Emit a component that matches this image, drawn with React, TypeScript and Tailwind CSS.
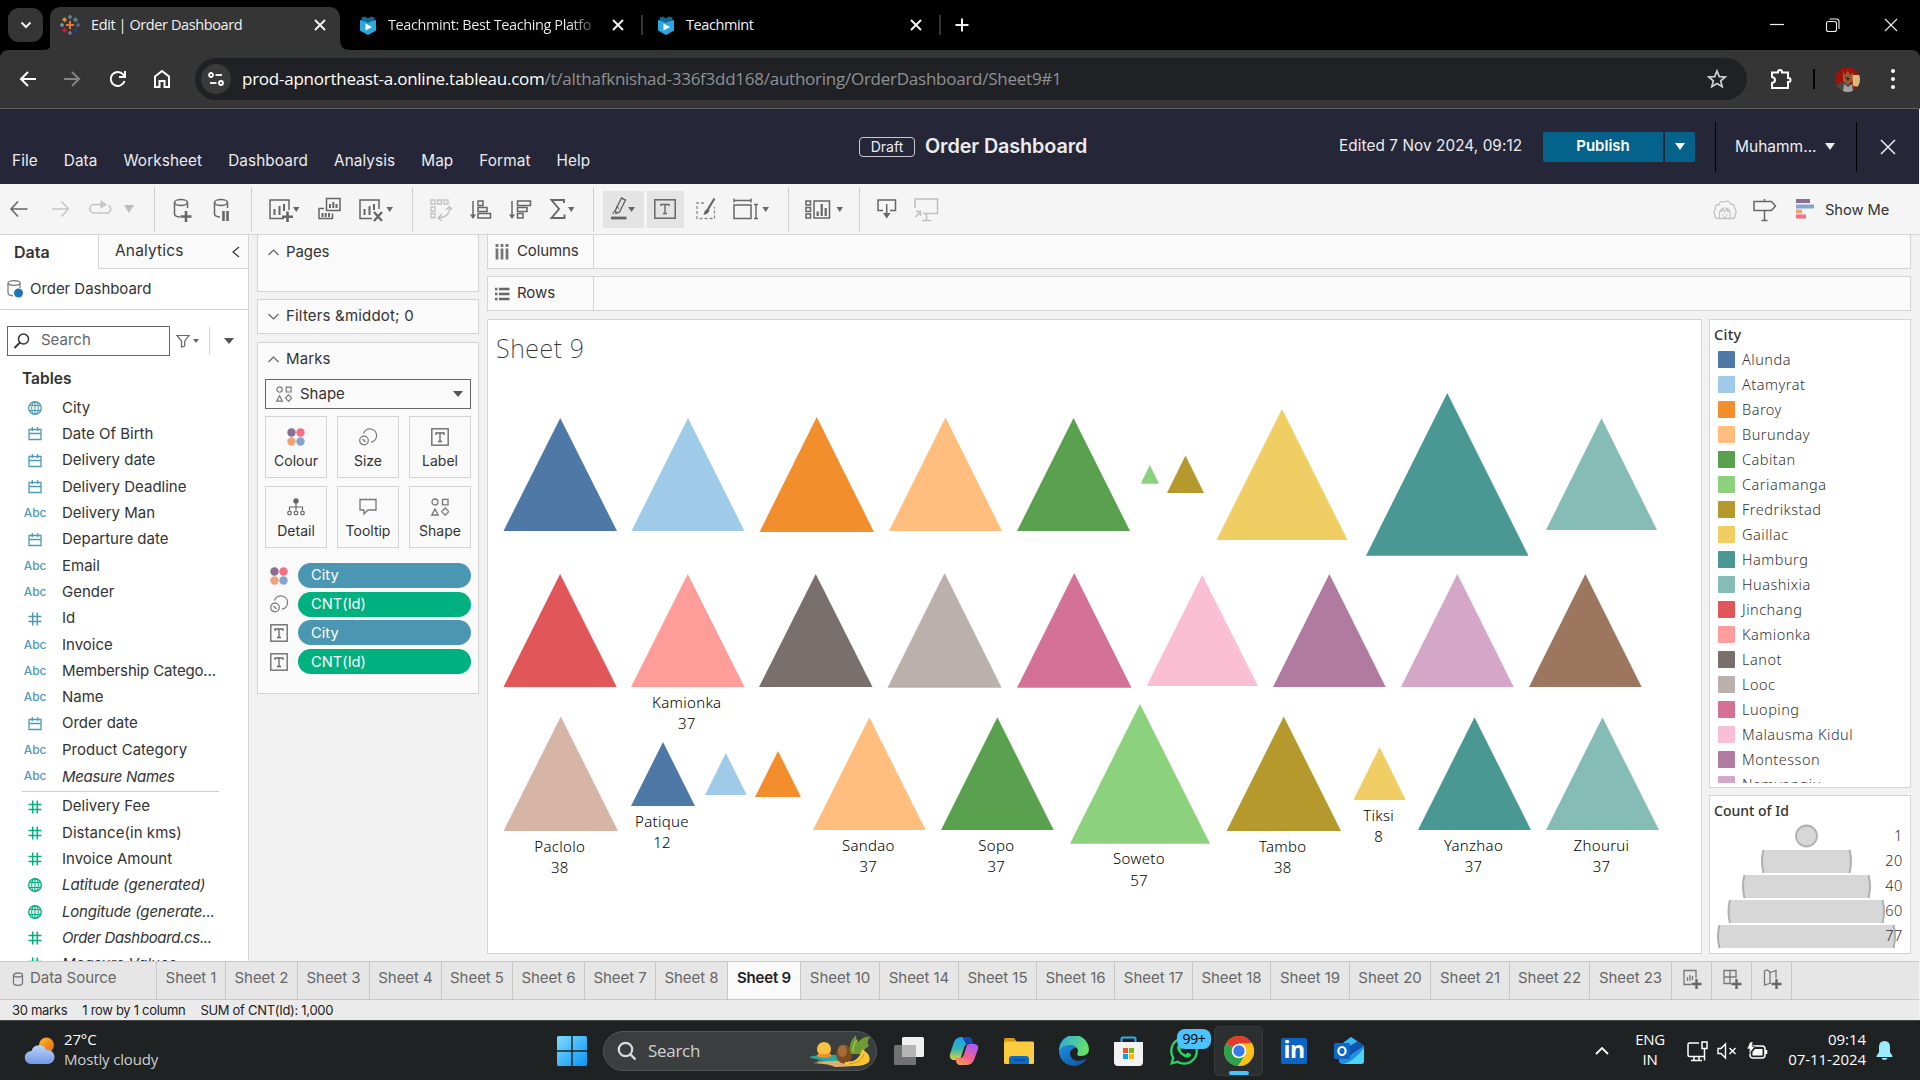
import React from "react";
import { FaWhatsapp } from "react-icons/fa";

type IconProps = { w: number; h?: number; className?: string; children: React.ReactNode };

function Icon({ w, h = 24, className = "", children }: IconProps) {
  return (
    <svg
      width={w}
      height={h}
      viewBox={`0 0 ${w} ${h}`}
      fill="none"
      stroke="currentColor"
      strokeWidth={1.5}
      className={`shrink-0 overflow-visible ${className}`}
    >
      {children}
    </svg>
  );
}

function Caret({ className = "", w = 10, h = 6 }: { className?: string; w?: number; h?: number }) {
  return (
    <svg width={w} height={h} viewBox="0 0 10 6" preserveAspectRatio="none" className={`shrink-0 ${className}`}>
      <path d="M0 0H10L5 6Z" fill="currentColor" />
    </svg>
  );
}

function Close({ s, sw, className = "" }: { s: number; sw: number; className?: string }) {
  return (
    <svg width={s} height={s} viewBox={`0 0 ${s} ${s}`} stroke="currentColor" strokeWidth={sw} className={`shrink-0 ${className}`}>
      <path d={`M1 1L${s - 1} ${s - 1}M${s - 1} 1L1 ${s - 1}`} />
    </svg>
  );
}

function TeachmintIcon({ className = "" }: { className?: string }) {
  return (
    <svg width="16" height="19" viewBox="0 0 16 19" className={`shrink-0 ${className}`}>
      <path d="M1.500 1.500L5 0.500L8 2.500L11 0.500L14.500 1.500V6H1.500Z" fill="#15678f" />
      <path d="M0 4L8 6.500L16 4V14.500L8 19L0 14.500Z" fill="#29a9e1" />
      <path d="M5.500 7.500L12 11L5.500 14.500Z" fill="#fff" />
    </svg>
  );
}

function TabStrip() {
  return (
    <div className="flex h-[50px] items-end bg-black text-[#f1f1f1]">
      <div className="mb-[8px] ml-[8px] flex h-[34px] w-[35px] items-center justify-center rounded-[11px] bg-[#353535]">
        <Icon w={12} h={8}>
          <path d="M1.500 1.500L6 6L10.500 1.500" strokeWidth={2} />
        </Icon>
      </div>
      <svg width="9" height="10" className="shrink-0">
        <path d="M9 0V10H0Q9 10 9 0Z" fill="#353535" />
      </svg>
      <div className="-ml-[2px] flex h-[43px] w-[290px] items-center rounded-t-[10px] bg-[#353535] pb-[7px]">
        <svg width="20" height="20" viewBox="0 0 20 20" className="ml-[10px] shrink-0" strokeWidth="1.700">
          <path d="M10 6V14M6 10H14" stroke="#e8762c" strokeWidth="2" />
          <path d="M10 0V4M8 2H12" stroke="#5b879b" />
          <path d="M10 16V20M8 18H12" stroke="#7b6f9e" />
          <path d="M2 8V12M0 10H4" stroke="#7199a6" />
          <path d="M18 8V12M16 10H20" stroke="#5c6692" />
          <path d="M4.500 2.500V7M2.300 4.700H6.700" stroke="#eb912c" />
          <path d="M15.500 2.500V7M13.300 4.700H17.700" stroke="#59879b" />
          <path d="M4.500 13V17.500M2.300 15.300H6.700" stroke="#c72037" />
          <path d="M15.500 13V17.500M13.300 15.300H17.700" stroke="#1f457e" />
        </svg>
        <span className="ml-[11px] w-[223px] text-[14.500px] tracking-[-0.4px]">Edit | Order Dashboard</span>
        <Close s={12} sw={2} />
      </div>
      <svg width="10" height="10" className="shrink-0">
        <path d="M0 0V10H10Q0 10 0 0Z" fill="#353535" />
      </svg>
      <div className="mb-[7px] flex h-[36px] items-center">
        <TeachmintIcon className="ml-[10px]" />
        <span className="ml-[12px] w-[211px] whitespace-nowrap bg-linear-to-r from-[#f1f1f1] from-86% to-[#222] bg-clip-text text-[14.500px] tracking-[-0.4px] text-transparent">
          Teachmint: Best Teaching Platfo
        </span>
        <Close s={12} sw={2} className="ml-[13px]" />
        <div className="ml-[17px] h-[20px] w-[2px] bg-[#353535]" />
        <TeachmintIcon className="ml-[15px]" />
        <span className="ml-[12px] w-[224px] text-[14.500px] tracking-[-0.4px]">Teachmint</span>
        <Close s={12} sw={2} />
        <div className="ml-[17px] h-[20px] w-[2px] bg-[#353535]" />
        <Icon w={14} h={14} className="ml-[14px]">
          <path d="M7 0.500V13.500M0.500 7H13.500" strokeWidth={2} />
        </Icon>
      </div>
      <div className="mb-[7px] ml-auto flex h-[36px] items-center pr-[22px]">
        <Icon w={14} h={14}>
          <path d="M0 6.500H14" strokeWidth={1.200} />
        </Icon>
        <Icon w={14} h={14} className="ml-[42px]">
          <rect x="0.500" y="3.500" width="10" height="10" rx="2" strokeWidth={1.100} />
          <path d="M3.500 1H10.500Q13 1 13 3.500V11" strokeWidth={1.100} />
        </Icon>
        <Close s={14} sw={1.1} className="ml-[44px]" />
      </div>
    </div>
  );
}

function AddressBar() {
  return (
    <div className="bg-black">
      <div className="flex h-[59px] items-center rounded-t-[8px] border-b border-[#5f5f5f] bg-[#353535] text-white">
        <Icon w={16} h={16} className="ml-[20px]">
          <path d="M8 1L1 8L8 15M1 8H16" strokeWidth={2} />
        </Icon>
        <Icon w={16} h={16} className="ml-[28px] text-[#848484]">
          <path d="M8 1L15 8L8 15M15 8H0" strokeWidth={2} />
        </Icon>
        <Icon w={16} h={16} className="ml-[30px]">
          <path d="M14.500 10A7 7 0 1 1 13 3.300L15 5.500" strokeWidth={2} />
          <path d="M15 0V6H9" strokeWidth={2} />
        </Icon>
        <Icon w={16} h={18} className="ml-[28px]">
          <path d="M1 6.500L8 1L15 6.500V17H10.500V11H5.500V17H1Z" strokeWidth={2} />
        </Icon>
        <div className="ml-[25px] flex h-[42px] w-[1552px] items-center rounded-full bg-[#202124]">
          <div className="ml-[6px] flex h-[30px] w-[30px] items-center justify-center rounded-full bg-[#3a3a3a]">
            <Icon w={16} h={14}>
              <circle cx="3" cy="3" r="2" strokeWidth={1.800} />
              <path d="M7.500 3H14" strokeWidth={1.800} />
              <circle cx="13" cy="11" r="2" strokeWidth={1.800} />
              <path d="M2 11H8.500" strokeWidth={1.800} />
            </Icon>
          </div>
          <div className="ml-[11px] w-[1320px] whitespace-nowrap text-[17px] tracking-[-0.250px] text-[#8f9194]">
            <span className="text-white">prod-apnortheast-a.online.tableau.com</span>
            /t/althafknishad-336f3dd168/authoring/OrderDashboard/Sheet9#1
          </div>
          <Icon w={20} h={20} className="ml-auto mr-[20px] text-[#d0d0d0]">
            <path d="M10 2L12.300 7.600L18.300 8L13.700 11.900L15.200 17.800L10 14.600L4.800 17.800L6.300 11.900L1.700 8L7.700 7.600Z" strokeWidth={1.700} />
          </Icon>
        </div>
        <Icon w={20} h={20} className="ml-[24px]">
          <path
            d="M1 3.500H7V3Q7 1 9 1Q11 1 11 3V3.500H17V9H17.500Q19.500 9 19.500 11Q19.500 13 17.500 13H17V19H1V14Q4 13.500 4 11Q4 8.500 1 8Z"
            strokeWidth={2}
          />
        </Icon>
        <div className="ml-[22px] h-[20px] w-[2px] bg-black" />
        <svg width="25" height="25" viewBox="0 0 25 25" className="ml-[20px]">
          <defs>
            <clipPath id="avatar">
              <circle cx="12.500" cy="12.500" r="12.500" />
            </clipPath>
          </defs>
          <g clipPath="url(#avatar)">
            <rect width="25" height="25" fill="#9c120c" />
            <path d="M17 8L25 8V20L18 19Z" fill="#d9b878" />
            <path d="M0 18L8 15L18 18L20 25H0Z" fill="#4a4644" />
            <path d="M8 4L10 8L13 3L15 8L18 5L17 14L13 18L8 14Z" fill="#9a5a34" />
            <path d="M9 17L13 20L17 17L18 25H8Z" fill="#a4a3a4" />
            <path d="M10 10L15 11L13 14Z" fill="#41241d" />
          </g>
        </svg>
        <div className="ml-[31px] flex flex-col gap-[4px]">
          <div className="h-[4px] w-[4px] rounded-full bg-white" />
          <div className="h-[4px] w-[4px] rounded-full bg-white" />
          <div className="h-[4px] w-[4px] rounded-full bg-white" />
        </div>
      </div>
    </div>
  );
}

const menus = ["File", "Data", "Worksheet", "Dashboard", "Analysis", "Map", "Format", "Help"];

function AppHeader() {
  return (
    <div className="flex h-[75px] w-[1919px] bg-[#252738] font-['Inter',sans-serif] text-[#ececee]">
      <div className="flex w-[859px] gap-[26px] pl-[12px] pt-[42px] text-[15.300px] leading-[20px] tracking-[0.1px]">
        {menus.map((m) => (
          <span key={m}>{m}</span>
        ))}
      </div>
      <div className="flex h-[75px] items-center">
        <div className="flex h-[20px] w-[56px] items-center justify-center rounded-[4px] border border-[#c9c9cd] text-[14px]">Draft</div>
        <span className="ml-[10px] mt-[1px] w-[414px] whitespace-nowrap text-[19.800px] font-semibold tracking-[-0.1px]">Order Dashboard</span>
        <span className="w-[204px] whitespace-nowrap text-[15.300px] tracking-[0.080px]">Edited 7 Nov 2024, 09:12</span>
        <div className="flex h-[30px] w-[120px] items-center justify-center rounded-l-[2px] bg-[#05628a] text-[15px] font-semibold text-white">
          Publish
        </div>
        <div className="ml-[2px] flex h-[30px] w-[30px] items-center justify-center rounded-r-[2px] bg-[#05628a] text-white">
          <Caret h={7} />
        </div>
        <div className="ml-[20px] h-[50px] w-px bg-black" />
        <span className="ml-[19px] w-[85px] text-[15.500px]">Muhamm...</span>
        <Caret h={7} className="ml-[5px]" />
        <div className="ml-[21px] h-[50px] w-px bg-black" />
        <Close s={16} sw={1.5} className="ml-[23px]" />
      </div>
    </div>
  );
}

function VSep({ className }: { className: string }) {
  return <div className={`h-[45px] w-px shrink-0 bg-[#cfcfcf] ${className}`} />;
}

function LetterBox({ className = "" }: { className?: string }) {
  return (
    <svg width="18" height="18" viewBox="0 0 18 18" fill="none" stroke="#777" strokeWidth="1.500" className={`shrink-0 ${className}`}>
      <rect x="0.800" y="0.800" width="16.400" height="16.400" />
      <path d="M5 7V5H13V7M9 5V13.500M7 13.500H11" stroke="#666" strokeWidth="1.300" />
    </svg>
  );
}

function Toolbar() {
  return (
    <div className="flex h-[51px] items-center border-b border-[#d4d4d4] bg-[#f5f5f5] font-['Inter',sans-serif] text-[#666]">
      <Icon w={18} className="ml-[10px]">
        <path d="M8 4.500L1 12L8 19.500M1 12H17.500" />
      </Icon>
      <Icon w={18} className="ml-[24px] text-[#c6c6c6]">
        <path d="M9.500 4.500L16.500 12L9.500 19.500M16.500 12H0" />
      </Icon>
      <Icon w={24} className="ml-[18px] text-[#c6c6c6]">
        <path d="M13 7.500H6A4 4 0 0 0 6 16H18A4 4 0 0 0 20.500 8.500" strokeWidth={1.700} />
        <path d="M12.500 3L19 7.500L12.500 12Z" fill="currentColor" stroke="none" />
      </Icon>
      <Caret className="ml-[12px] text-[#bdbdbd]" h={8} />
      <VSep className="ml-[20px]" />
      <Icon w={20} className="ml-[18px]">
        <ellipse cx="8" cy="5.500" rx="6.500" ry="3" />
        <path d="M1.500 5.500V17Q1.500 19.500 7 20M14.500 5.500V11" />
        <path d="M13 14V25M7.500 19.500H18.500" strokeWidth={2.600} />
      </Icon>
      <Icon w={18} className="ml-[20px]">
        <ellipse cx="8" cy="5.500" rx="6.500" ry="3" />
        <path d="M1.500 5.500V17Q1.500 19.500 7 20M14.500 5.500V11" />
        <path d="M10.500 14V24M14.500 14V24" strokeWidth={2.600} />
      </Icon>
      <VSep className="ml-[20px]" />
      <Icon w={31} className="ml-[17px]">
        <path d="M15 21.500H1V3H20V13" />
        <path d="M5.500 12V18M10.500 9V18M15 7V14" strokeWidth={2} />
        <path d="M18.500 14.500V25M13 19.700H24" strokeWidth={2.600} />
        <path d="M24 10H30.500L27.200 15Z" fill="currentColor" stroke="none" />
      </Icon>
      <Icon w={24} className="ml-[18px]">
        <path d="M8.500 1.500H22V13.500H8.500Z" />
        <path d="M12 7V11M15.300 5V11M18.500 7V11" strokeWidth={2} />
        <path d="M6 11.500H1V21.500H14.500V16.500" />
        <path d="M4.500 16V20M7.700 16V20M11 16V20" strokeWidth={2} />
      </Icon>
      <Icon w={34} className="ml-[17px]">
        <path d="M13 21.500H1V3H20V12" />
        <path d="M5.500 12V18M10.500 9V18M15 7V13" strokeWidth={2} />
        <path d="M15 15L23 24M23 15L15 24" strokeWidth={2.300} />
        <path d="M27.500 10H34L30.700 15Z" fill="currentColor" stroke="none" />
      </Icon>
      <VSep className="ml-[19px]" />
      <Icon w={22} className="ml-[17px] text-[#c0c0c0]">
        <path d="M1 3H5V7H1ZM7.500 3H11.500V7H7.500ZM14 3H18V7H14ZM1 10H5V14H1ZM1 16.500H5V20.500H1Z" strokeWidth={1.300} />
        <path d="M19.500 10Q20 20 9 21M12 17L8 21L12 24M16 13L19.500 9.500L22 13" strokeWidth={1.300} />
      </Icon>
      <Icon w={22} className="ml-[18px]">
        <path d="M3 4V19M8 4H13V8.500H8ZM8 10.500H17V14.500H8ZM8 16.500H20.500V21H8Z" />
        <path d="M0 17.500H6L3 22Z" fill="currentColor" stroke="none" />
      </Icon>
      <Icon w={23} className="ml-[17px]">
        <path d="M3 4V19M8.500 4H21.500V8.500H8.500ZM8.500 10.500H18V14.500H8.500ZM8.500 16.500H14V21H8.500Z" />
        <path d="M0 17.500H6L3 22Z" fill="currentColor" stroke="none" />
      </Icon>
      <Icon w={25} className="ml-[18px]">
        <path d="M14 6V3H1.500L9 12L1.500 21H14.500V17.500" strokeWidth={1.900} />
        <path d="M18 10H24.500L21.300 15Z" fill="currentColor" stroke="none" />
      </Icon>
      <VSep className="ml-[18px]" />
      <div className="ml-[9px] flex h-[37px] w-[41px] items-center bg-[#e4e4e4]">
        <Icon w={25} className="ml-[8px]">
          <path d="M10.500 1L14.500 3L8.500 15L5 16.500L4.500 13Z" strokeWidth={1.400} />
          <path d="M4.500 13L1.500 17M8 11.500L5 9.500" strokeWidth={1.200} />
          <path d="M0 21H15.500" strokeWidth={2.800} />
          <path d="M17 10H24L20.500 15Z" fill="currentColor" stroke="none" />
        </Icon>
      </div>
      <div className="ml-[3px] flex h-[37px] w-[37px] items-center bg-[#e4e4e4] pl-[7px]">
        <Icon w={22} h={20}>
          <rect x="0.800" y="0.800" width="20.400" height="18.400" />
          <path d="M7 7V5.500H15V7M11 5.500V14.500M9 14.500H13" strokeWidth={1.400} />
        </Icon>
      </div>
      <Icon w={20} className="ml-[12px]">
        <path d="M8 6H1V21.500H18.500V10" strokeDasharray="3 2" strokeWidth={1.300} stroke="#8a8a8a" />
        <path d="M18.500 1.500L12 12" strokeWidth={2.200} />
        <path d="M12.500 11Q8 13 7.500 18Q13 17 13.500 13Z" fill="currentColor" stroke="none" />
      </Icon>
      <Icon w={35} className="ml-[17px]">
        <path d="M1 8H18V21.500H1Z" />
        <path d="M1 1.500V5.500M18 1.500V5.500M1 3.500H18M21 7.500H25M21 21.500H25M23 7.500V21.500" strokeWidth={1.400} />
        <path d="M29.500 10H36L32.700 15Z" fill="currentColor" stroke="none" />
      </Icon>
      <VSep className="ml-[20px]" />
      <Icon w={37} className="ml-[16px]">
        <path d="M1 4H5.500V8H1ZM1 10.500H5.500V14.500H1ZM1 17H5.500V21H1ZM9 4H24.500V21H9Z" />
        <path d="M12.700 14.500V19M16.700 7V19M20.700 11V19" strokeWidth={2.200} />
        <path d="M31.500 10H38L34.800 15Z" fill="currentColor" stroke="none" />
      </Icon>
      <VSep className="ml-[17px]" />
      <Icon w={19} className="ml-[17px]">
        <path d="M6 13.500H1V3H18.500V13.500H13M9.700 7V18" />
        <path d="M6 16H13.500L9.700 21.500Z" fill="currentColor" stroke="none" />
      </Icon>
      <Icon w={25} className="ml-[18px] text-[#c0c0c0]">
        <path d="M1 11V2H23.500V16.500H9M12.500 17V23M8 23.500H17M1.500 20L6.500 15M2 14.500H6.500V19" />
      </Icon>
      <Icon w={24} className="ml-[774px] text-[#c4c4c4]">
        <path
          d="M5 21.500Q1 21 2 17.500Q-0.500 15 2.500 12Q1.500 7.500 6 7.500Q7 3.500 11.500 5Q16 2.500 17.500 7Q22 7 21.500 11.500Q24.500 14.500 22 17.500Q23 21.500 19 21.500Z"
          strokeWidth={1.300}
        />
        <path d="M6.500 21V15Q8 11 12 11Q16 11 17 15V21M7.500 15L10 12.500L11.500 15L13.500 12.500L16 15M10 17V18.500M13.800 17V18.500M11 21V20H13V21" strokeWidth={1.200} />
      </Icon>
      <Icon w={24} className="ml-[16px]">
        <path d="M1 4.500H18.500L22.500 9L18.500 13.500H1ZM11.500 2V4.500M11.500 13.500V23M8.500 23.500H14.500" />
      </Icon>
      <svg width="20" height="20" viewBox="0 0 20 20" className="ml-[18px] shrink-0">
        <path d="M1 0H15V4H1Z" fill="#8a6d96" />
        <path d="M1 5.500H19V9.500H1Z" fill="#82a6cf" />
        <path d="M1 10.500H7V14.500H1Z" fill="#f1a377" />
        <path d="M1 15.500H11V19.500H1Z" fill="#fa6d81" />
      </svg>
      <span className="ml-[10px] mt-[2px] whitespace-nowrap text-[14.700px] tracking-[-0.050px] text-[#333]">Show Me</span>
    </div>
  );
}

type Field = { icon: "globe" | "date" | "abc" | "num"; name: string; style?: string };

const dimensions: Field[] = [
  { icon: "globe", name: "City" },
  { icon: "date", name: "Date Of Birth" },
  { icon: "date", name: "Delivery date" },
  { icon: "date", name: "Delivery Deadline" },
  { icon: "abc", name: "Delivery Man" },
  { icon: "date", name: "Departure date" },
  { icon: "abc", name: "Email" },
  { icon: "abc", name: "Gender" },
  { icon: "num", name: "Id" },
  { icon: "abc", name: "Invoice" },
  { icon: "abc", name: "Membership Catego...", style: "tracking-[-0.150px]" },
  { icon: "abc", name: "Name" },
  { icon: "date", name: "Order date" },
  { icon: "abc", name: "Product Category" },
  { icon: "abc", name: "Measure Names", style: "italic tracking-[-0.300px] pt-[1px]" },
];

const measures: Field[] = [
  { icon: "num", name: "Delivery Fee" },
  { icon: "num", name: "Distance(in kms)", style: "tracking-[0.060px]" },
  { icon: "num", name: "Invoice Amount" },
  { icon: "globe", name: "Latitude (generated)", style: "italic tracking-[-0.100px]" },
  { icon: "globe", name: "Longitude (generate...", style: "italic tracking-[-0.180px]" },
  { icon: "num", name: "Order Dashboard.cs...", style: "italic tracking-[-0.350px]" },
  { icon: "num", name: "Measure Values", style: "italic" },
];

function FieldIcon({ kind }: { kind: Field["icon"] }) {
  if (kind === "abc") return <span className="text-[12px] font-medium tracking-[-0.2px]">Abc</span>;
  if (kind === "globe")
    return (
      <Icon w={14} h={14}>
        <circle cx="7" cy="7" r="6.300" strokeWidth={1.400} />
        <path d="M7 0.700V13.300M1.500 4.500H12.500M1.500 9.500H12.500" strokeWidth={1.100} />
        <ellipse cx="7" cy="7" rx="3.300" ry="6.300" strokeWidth={1.100} />
      </Icon>
    );
  if (kind === "date")
    return (
      <Icon w={14} h={14}>
        <path d="M1 2.500H13V12.500H1ZM1 6.500H13M4.300 0V4M9.700 0V4" strokeWidth={1.300} />
      </Icon>
    );
  return (
    <Icon w={14} h={14}>
      <path d="M0.500 4.500H13.500M0.500 9.500H13.500M4.700 0.500V13.500M9.300 0.500V13.500" strokeWidth={1.500} />
    </Icon>
  );
}

function FieldRow({ f, color }: { f: Field; color: string }) {
  return (
    <div className="flex h-[26.300px] items-center">
      <div className={`ml-[20px] flex w-[30px] justify-center ${color}`}>
        <FieldIcon kind={f.icon} />
      </div>
      <span className={`ml-[12px] whitespace-nowrap text-[15px] text-[#333] ${f.style ?? ""}`}>{f.name}</span>
    </div>
  );
}

function DataPane() {
  return (
    <div className="h-[726px] w-[249px] shrink-0 overflow-hidden border-r border-[#d4d4d4] bg-white text-[15px] text-[#333]">
      <div className="flex h-[34px]">
        <div className="w-[98px] pl-[14px] pt-[6px] text-[16px] font-semibold leading-[22px]">Data</div>
        <div className="flex h-[34px] w-[150px] justify-between border-b border-l border-[#d4d4d4] bg-[#fafafa] pl-[16px] pr-[8px] pt-[5px] leading-[22px]">
          <span className="text-[15.500px] tracking-[0.150px]">Analytics</span>
          <Icon w={8} h={12} className="mt-[6px]">
            <path d="M7 1L1 6L7 11" strokeWidth={1.200} />
          </Icon>
        </div>
      </div>
      <div className="flex h-[41px] items-center border-b border-[#d4d4d4] pl-[7px]">
        <Icon w={16} h={18} className="text-[#777]">
          <ellipse cx="7" cy="3" rx="6" ry="2.300" strokeWidth={1.200} />
          <path d="M1 3V13Q1 15.500 6 15.800M13 3V8" strokeWidth={1.200} />
          <circle cx="11.500" cy="13" r="4.500" fill="#2076b4" stroke="none" />
        </Icon>
        <span className="ml-[7px] tracking-[-0.050px]">Order Dashboard</span>
      </div>
      <div className="flex h-[61px] items-center pl-[7px]">
        <div className="flex h-[30px] w-[163px] items-center border border-[#666] pl-[6px]">
          <Icon w={16} h={16}>
            <circle cx="9.500" cy="6" r="5" stroke="#333" />
            <path d="M6 9.500L0.500 15" stroke="#333" strokeWidth={1.800} />
          </Icon>
          <span className="ml-[11px] text-[15px] text-[#666]">Search</span>
        </div>
        <Icon w={24} h={16} className="ml-[6px] text-[#666]">
          <path d="M1 2.500H13L8.700 8V13L5.500 14V8Z" strokeWidth={1.200} />
          <path d="M17 6H23L20 10Z" fill="currentColor" stroke="none" />
        </Icon>
        <div className="ml-[9px] h-[28px] w-px bg-[#d4d4d4]" />
        <Caret className="ml-[14px] text-[#555]" />
      </div>
      <div className="h-[24px] pl-[22px] text-[15.500px] font-semibold leading-[16px]">Tables</div>
      {dimensions.map((f) => (
        <FieldRow key={f.name} f={f} color="text-[#4e9bb7]" />
      ))}
      <div className="mb-[1px] ml-[22px] mt-[2px] h-px w-[197px] bg-[#cfcfcf]" />
      {measures.map((f) => (
        <FieldRow key={f.name} f={f} color="text-[#00b180]" />
      ))}
    </div>
  );
}

function Chevron({ up = false }: { up?: boolean }) {
  return (
    <Icon w={11} h={7} className="text-[#666]">
      <path d={up ? "M0.500 6L5.500 1L10.500 6" : "M0.500 1L5.500 6L10.500 1"} strokeWidth={1.200} />
    </Icon>
  );
}

function ColourDots() {
  return (
    <svg width="18" height="18" viewBox="0 0 18 18" className="shrink-0">
      <circle cx="4.500" cy="4.500" r="4.200" fill="#8a6d96" />
      <circle cx="13.500" cy="4.500" r="4.200" fill="#fa6d81" />
      <circle cx="4.500" cy="13.500" r="4.200" fill="#f1a377" />
      <circle cx="13.500" cy="13.500" r="4.200" fill="#82a6cf" />
    </svg>
  );
}

function SizeIcon() {
  return (
    <Icon w={18} h={18} className="text-[#777]">
      <circle cx="5" cy="12.500" r="4.300" strokeWidth={1.200} />
      <path d="M3.500 11L6.500 14" strokeWidth={1.200} />
      <path d="M4.500 5.500A6.700 6.700 0 1 1 12 14.200" strokeWidth={1.200} />
    </Icon>
  );
}

function ShapesIcon({ s = 18 }: { s?: number }) {
  return (
    <svg width={s} height={s} viewBox="0 0 18 18" fill="none" stroke="#777" strokeWidth="1.300" className="shrink-0">
      <circle cx="4" cy="4" r="3" />
      <path d="M11.500 1.300H17V6.800H11.500ZM4 11L7.200 17H0.800ZM14.200 10L17.800 13.600L14.200 17.200L10.600 13.600Z" />
    </svg>
  );
}

function DetailIcon() {
  return (
    <Icon w={18} h={18} className="text-[#666]">
      <circle cx="9" cy="3" r="2.700" fill="currentColor" stroke="none" />
      <path d="M9 5V12M2.500 12V9H15.500V12" strokeWidth={1.200} />
      <circle cx="2.500" cy="15" r="1.800" strokeWidth={1.200} />
      <circle cx="9" cy="15" r="1.800" strokeWidth={1.200} />
      <circle cx="15.500" cy="15" r="1.800" strokeWidth={1.200} />
    </Icon>
  );
}

function TooltipIcon() {
  return (
    <Icon w={18} h={18} className="text-[#777]">
      <path d="M1 1.500H17V12H9L5 16V12H1Z" strokeWidth={1.300} />
    </Icon>
  );
}

const markButtons = [
  { label: "Colour", icon: <ColourDots /> },
  { label: "Size", icon: <SizeIcon /> },
  { label: "Label", icon: <LetterBox /> },
  { label: "Detail", icon: <DetailIcon /> },
  { label: "Tooltip", icon: <TooltipIcon /> },
  { label: "Shape", icon: <ShapesIcon /> },
];

const pills = [
  { icon: <ColourDots />, label: "City", bg: "bg-[#4a96b3]" },
  { icon: <SizeIcon />, label: "CNT(Id)", bg: "bg-[#00b180]" },
  { icon: <LetterBox />, label: "City", bg: "bg-[#4a96b3]" },
  { icon: <LetterBox />, label: "CNT(Id)", bg: "bg-[#00b180]" },
];

function Cards() {
  return (
    <div className="-mt-px ml-[8px] w-[222px] shrink-0 text-[15px] text-[#333]">
      <div className="flex h-[58px] gap-[7px] border border-[#d4d4d4] bg-[#fafafa] pl-[10px]">
        <div className="mt-[14px]">
          <Chevron up />
        </div>
        <span className="mt-[7px] leading-[20px] tracking-[-0.1px]">Pages</span>
      </div>
      <div className="mt-[7px] flex h-[35px] items-center gap-[7px] border border-[#d4d4d4] bg-[#fafafa] pl-[10px]">
        <Chevron />
        <span className="tracking-[0.180px]">Filters &amp;middot; 0</span>
      </div>
      <div className="mt-[8px] h-[352px] border border-[#d4d4d4] bg-[#fafafa] px-[7px]">
        <div className="flex h-[36px] items-center gap-[7px] pb-[4px] pl-[3px]">
          <Chevron up />
          <span className="tracking-[0.100px]">Marks</span>
        </div>
        <div className="flex h-[30px] items-center border border-[#666] pl-[10px] pr-[7px]">
          <ShapesIcon s={16} />
          <span className="ml-[8px] flex-1">Shape</span>
          <Caret className="text-[#555]" />
        </div>
        <div className="mt-[7px] grid grid-cols-3 gap-x-[10px] gap-y-[8px]">
          {markButtons.map((b) => (
            <div key={b.label} className="flex h-[62px] flex-col items-center border border-[#d4d4d4] pt-[11px]">
              {b.icon}
              <span className="mt-[5px] text-[14px] leading-[20px]">{b.label}</span>
            </div>
          ))}
        </div>
        <div className="mt-[15px] flex flex-col gap-[3.700px]">
          {pills.map((p, i) => (
            <div key={i} className="flex h-[25px] items-center pl-[5px]">
              {p.icon}
              <div className={`ml-[10px] flex h-[25px] flex-1 items-center rounded-full pl-[13px] text-[14.700px] text-white ${p.bg}`}>
                {p.label}
              </div>
            </div>
          ))}
        </div>
      </div>
    </div>
  );
}

function Shelf({ icon, label, className = "" }: { icon: React.ReactNode; label: string; className?: string }) {
  return (
    <div className={`flex h-[35px] w-[1424px] border border-[#d4d4d4] bg-[#fafafa] ${className}`}>
      <div className="flex w-[106px] items-center gap-[8px] border-r border-[#d4d4d4] pl-[7px] text-[15px] text-[#333]">
        {icon}
        <span className="tracking-[-0.1px]">{label}</span>
      </div>
    </div>
  );
}

/* left, right, top, base, fill, optional label and count */
type Mark = [number, number, number, number, string, string?, number?];

const marks: Mark[] = [
  [503.5, 617, 418, 531, "#4e79a7"],
  [631.5, 744.5, 418, 531, "#a0cbe8"],
  [759.5, 874, 417, 532, "#f28e2b"],
  [889, 1002, 417.5, 531, "#ffbe7d"],
  [1017, 1130, 418, 531, "#59a14f"],
  [1140.7, 1159, 465, 483.7, "#8cd17d"],
  [1167, 1204, 455.5, 493, "#b6992d"],
  [1216.5, 1347.5, 409, 540, "#f1ce63"],
  [1366, 1528.5, 393, 555.7, "#499894"],
  [1546, 1657, 418.3, 530, "#86bcb6"],
  [503.5, 616.7, 574, 687, "#e15759"],
  [631, 744.5, 574, 687, "#ff9d9a", "Kamionka", 37],
  [759, 872.5, 574, 687, "#79706e"],
  [887.5, 1001.7, 573, 687.7, "#bab0ac"],
  [1017, 1131.5, 573, 687.7, "#d37295"],
  [1146.6, 1258, 575, 686, "#fabfd2"],
  [1273, 1385.7, 574, 687, "#b07aa1"],
  [1401, 1513.7, 574, 687, "#d4a6c8"],
  [1529, 1641.7, 574, 687, "#9d7660"],
  [503.5, 618, 716.6, 831, "#d7b5a6", "Paclolo", 38],
  [631, 695, 742, 806, "#4e79a7", "Patique", 12],
  [705, 746.7, 753, 795, "#a0cbe8"],
  [755, 801, 751, 797, "#f28e2b"],
  [813, 925.7, 717.3, 830, "#ffbe7d", "Sandao", 37],
  [941, 1053.7, 717.3, 830, "#59a14f", "Sopo", 37],
  [1070, 1210, 704, 843.7, "#8cd17d", "Soweto", 57],
  [1226.5, 1341, 716.6, 831, "#b6992d", "Tambo", 38],
  [1353.5, 1405.7, 747, 800, "#f1ce63", "Tiksi", 8],
  [1418, 1531, 717.3, 830, "#499894", "Yanzhao", 37],
  [1546, 1659, 717.3, 830, "#86bcb6", "Zhourui", 37],
];

function Viz() {
  return (
    <div className="h-[635px] w-[1215px] border border-[#d4d4d4] bg-white">
      <svg width="1213" height="633" viewBox="488 320 1213 633" fontFamily="'Noto Sans', sans-serif">
        <text x="496" y="358" fontSize="25" fontWeight="200" fill="#333" textLength="88">
          Sheet 9
        </text>
        {marks.map(([l, r, t, b, fill, name, n], i) => (
          <g key={i}>
            <path d={`M${l} ${b}L${(l + r) / 2} ${t}L${r} ${b}Z`} fill={fill} />
            {name && (
              <g fontSize="15" fontWeight="300" fill="#000" textAnchor="middle" letterSpacing="0.300">
                <text x={(l + r) / 2 - 1} y={b + 20.5}>
                  {name}
                </text>
                <text x={(l + r) / 2 - 1} y={b + 42}>
                  {n}
                </text>
              </g>
            )}
          </g>
        ))}
      </svg>
    </div>
  );
}

const legend = [
  { n: "Alunda", c: "bg-[#4e79a7]" },
  { n: "Atamyrat", c: "bg-[#a0cbe8]" },
  { n: "Baroy", c: "bg-[#f28e2b]" },
  { n: "Burunday", c: "bg-[#ffbe7d]" },
  { n: "Cabitan", c: "bg-[#59a14f]" },
  { n: "Cariamanga", c: "bg-[#8cd17d]" },
  { n: "Fredrikstad", c: "bg-[#b6992d]" },
  { n: "Gaillac", c: "bg-[#f1ce63]" },
  { n: "Hamburg", c: "bg-[#499894]" },
  { n: "Huashixia", c: "bg-[#86bcb6]" },
  { n: "Jinchang", c: "bg-[#e15759]" },
  { n: "Kamionka", c: "bg-[#ff9d9a]" },
  { n: "Lanot", c: "bg-[#79706e]" },
  { n: "Looc", c: "bg-[#bab0ac]" },
  { n: "Luoping", c: "bg-[#d37295]" },
  { n: "Malausma Kidul", c: "bg-[#fabfd2]" },
  { n: "Montesson", c: "bg-[#b07aa1]" },
  { n: "Namyangju", c: "bg-[#d4a6c8]" },
];

const sizeBars: [number, number, number][] = [
  [20, 1761, 1852],
  [40, 1742, 1871],
  [60, 1727.5, 1885],
  [77, 1717, 1896],
];

function Legends() {
  return (
    <div className="ml-[7px] w-[202px] text-[14.500px] text-[#333]">
      <div className="h-[469px] border border-[#d4d4d4] bg-white pl-[4px] pt-[4px]">
        <div className="h-[23px] font-['Noto_Sans',sans-serif] text-[14.500px] font-medium leading-[21px] tracking-[0.300px]">City</div>
        <div className="h-[436px] overflow-hidden">
          {legend.map((l) => (
            <div key={l.n} className="flex h-[25px] items-center pl-[4px]">
              <div className={`h-[17px] w-[17px] rounded-[1px] ${l.c}`} />
              <span className="ml-[7px] whitespace-nowrap font-['Noto_Sans',sans-serif] font-light tracking-[0.500px]">{l.n}</span>
            </div>
          ))}
        </div>
      </div>
      <div className="mt-[7px] h-[159px] border border-[#d4d4d4] bg-white">
        <svg width="200" height="157" viewBox="1710 796 200 157" fontFamily="'Noto Sans', sans-serif" fontSize="14.500">
          <text x="1714" y="816" fontSize="14" fontWeight="500" fill="#333">
            Count of Id
          </text>
          <circle cx="1806.500" cy="836" r="10.500" fill="#d7d7d7" stroke="#b0b0b0" strokeWidth="1.800" />
          {sizeBars.map(([n, l, r], i) => {
            const y = 850 + i * 25;
            return (
              <g key={n}>
                <path d={`M${l + 1.5} ${y}H${r - 1.5}Q${r + 0.5} ${y + 11.5} ${r - 1.5} ${y + 23}H${l + 1.5}Q${l - 0.5} ${y + 11.5} ${l + 1.5} ${y}Z`} fill="#d7d7d7" />
                <path
                  d={`M${l + 2.5} ${y}Q${l - 0.5} ${y + 11.5} ${l + 2.5} ${y + 23}M${r - 2.5} ${y}Q${r + 0.5} ${y + 11.5} ${r - 2.5} ${y + 23}`}
                  fill="none"
                  stroke="#b0b0b0"
                  strokeWidth="2"
                />
              </g>
            );
          })}
          {[1, 20, 40, 60, 77].map((n, i) => (
            <text key={n} x="1902.500" y={840.5 + i * 25} textAnchor="end" fontWeight="300" fill="#333" letterSpacing="0.300">
              {n}
            </text>
          ))}
        </svg>
      </div>
    </div>
  );
}

function Workspace() {
  return (
    <div className="flex h-[726px] bg-[#f2f2f2] font-['Inter',sans-serif]">
      <DataPane />
      <Cards />
      <div className="-mt-px ml-[8px]">
        <Shelf
          label="Columns"
          icon={
            <Icon w={14} h={16}>
              <path d="M2 4.500V15.500M7 4.500V15.500M12 4.500V15.500M2 0V3M7 0V3M12 0V3" strokeWidth={2.800} stroke="#757575" />
            </Icon>
          }
        />
        <Shelf
          className="mt-[7px]"
          label="Rows"
          icon={
            <Icon w={14} h={16}>
              <path d="M4 3H14.500M4 8H14.500M4 13H14.500M0 3H2.500M0 8H2.500M0 13H2.500" strokeWidth={2.600} stroke="#666" />
            </Icon>
          }
        />
        <div className="mt-[8px] flex">
          <Viz />
          <Legends />
        </div>
      </div>
    </div>
  );
}

const sheets: [string, string][] = [
  ["Sheet 1", "w-[69px]"],
  ["Sheet 2", "w-[72px]"],
  ["Sheet 3", "w-[72px]"],
  ["Sheet 4", "w-[72px]"],
  ["Sheet 5", "w-[71px]"],
  ["Sheet 6", "w-[72px]"],
  ["Sheet 7", "w-[71px]"],
  ["Sheet 8", "w-[72px]"],
  ["Sheet 9", "w-[73px]"],
  ["Sheet 10", "w-[79px]"],
  ["Sheet 14", "w-[79px]"],
  ["Sheet 15", "w-[78px]"],
  ["Sheet 16", "w-[78px]"],
  ["Sheet 17", "w-[78px]"],
  ["Sheet 18", "w-[78px]"],
  ["Sheet 19", "w-[79px]"],
  ["Sheet 20", "w-[81px]"],
  ["Sheet 21", "w-[79px]"],
  ["Sheet 22", "w-[80px]"],
  ["Sheet 23", "w-[82px]"],
];

function NewTab({ d }: { d: string }) {
  return (
    <div className="flex w-[40px] justify-center border-r border-[#c8c8c8] pt-[7px]">
      <Icon w={18} h={20} className="text-[#777]">
        <path d={d} strokeWidth={1.300} />
        <path d="M13.500 10V20M8.500 15H18.500" strokeWidth={2.400} stroke="#666" />
      </Icon>
    </div>
  );
}

function SheetTabs() {
  return (
    <div className="flex h-[39px] w-[1919px] border-y border-[#c8c8c8] bg-[#e6e6e6] font-['Inter',sans-serif] text-[15px] leading-[20px] tracking-[-0.050px] text-[#666]">
      <div className="flex w-[157px] items-start border-r border-[#c8c8c8] pl-[12px] pt-[6px]">
        <Icon w={12} h={14} className="mt-[4px] text-[#777]">
          <ellipse cx="6" cy="3" rx="4.500" ry="2" strokeWidth={1.300} />
          <path d="M1.500 3V11Q1.500 13.300 6 13.300Q10.500 13.300 10.500 11V3" strokeWidth={1.300} />
        </Icon>
        <span className="ml-[6px]">Data Source</span>
      </div>
      {sheets.map(([s, w]) => (
        <div
          key={s}
          className={`flex justify-center whitespace-nowrap border-r border-[#c8c8c8] pt-[6px] ${w} ${
            s === "Sheet 9" ? "bg-[#fafafa] font-semibold tracking-[-0.2px] text-[#222]" : ""
          }`}
        >
          {s}
        </div>
      ))}
      <NewTab d="M8 15.500H1V1.500H13V9M4.500 8V12M7 6V12M9.500 7V11" />
      <NewTab d="M8 14.500H1V1.500H13V9M7 1.500V14.500M1 8H13" />
      <NewTab d="M8 14L1.500 16V2L4.500 1L7.500 3.500L13 1.500V9M7 3.500V14" />
    </div>
  );
}

function StatusBar() {
  return (
    <div className="flex h-[20px] w-[1919px] items-center gap-[15px] bg-[#ebebeb] pl-[12px] pt-[1px] font-['Inter',sans-serif] text-[13px] tracking-[-0.300px] text-[#222]">
      <span>30 marks</span>
      <span>1 row by 1 column</span>
      <span>SUM of CNT(Id): 1,000</span>
    </div>
  );
}

function Taskbar() {
  return (
    <div className="flex h-[60px] items-center border-t border-[#454847] bg-[#1e2223] text-white">
      <svg width="32" height="28" viewBox="0 0 32 28" className="ml-[24px] shrink-0">
        <defs>
          <linearGradient id="sun" x1="0" y1="0" x2="1" y2="1">
            <stop offset="0" stopColor="#fbbd2b" />
            <stop offset="1" stopColor="#e9630c" />
          </linearGradient>
          <linearGradient id="cloud" x1="0" y1="0" x2="0" y2="1">
            <stop offset="0" stopColor="#b9d4fb" />
            <stop offset="1" stopColor="#7499e6" />
          </linearGradient>
        </defs>
        <circle cx="22.500" cy="8" r="7.500" fill="url(#sun)" />
        <path d="M7 27A6.500 6.500 0 0 1 7.500 14A8 8 0 0 1 22.500 13A7 7 0 0 1 24.500 27Z" fill="url(#cloud)" />
      </svg>
      <div className="-mt-[4px] ml-[8px] w-[493px] text-[15px] leading-[20px] tracking-[-0.150px]">
        <div>27°C</div>
        <div className="text-[#cdd0d0]">Mostly cloudy</div>
      </div>
      <svg width="30" height="30" viewBox="0 0 30 30" className="shrink-0">
        <defs>
          <linearGradient id="win" x1="0" y1="0" x2="1" y2="1" gradientUnits="objectBoundingBox">
            <stop offset="0" stopColor="#7fdcfb" />
            <stop offset="1" stopColor="#0a93f5" />
          </linearGradient>
        </defs>
        <path d="M0 1.500Q0 0 1.500 0H14.300V14.300H0ZM15.700 0H28.500Q30 0 30 1.500V14.300H15.700ZM0 15.700H14.300V30H1.500Q0 30 0 28.500ZM15.700 15.700H30V28.500Q30 30 28.500 30H15.700Z" fill="url(#win)" />
      </svg>
      <div className="ml-[16px] flex h-[40px] w-[274px] items-center rounded-full border border-[#525656] bg-[#3b3e3f] pl-[13px]">
        <Icon w={20} h={20} className="text-[#dcdcdc]">
          <circle cx="8.500" cy="8.500" r="6.700" strokeWidth={2.200} />
          <path d="M13.300 13.300L18.500 18.500" strokeWidth={2.400} />
        </Icon>
        <span className="ml-[11px] w-[161px] text-[17px] tracking-[-0.3px] text-[#d0d2d2]">Search</span>
        <svg width="62" height="34" viewBox="0 -2 62 34" className="shrink-0">
          <path d="M0 21Q10 18 30 19L32 26H8Q8 24 14 24Q4 23 0 21Z" fill="#28a6a4" />
          <path d="M4 27Q20 24 40 25L52 28Q44 31 26 31Q22 28 4 27Z" fill="#e2ad6c" />
          <circle cx="15" cy="13" r="7" fill="#f8c341" />
          <path d="M8.500 18H22V20.500Q15 23 8.500 20.500Z" fill="#f19030" />
          <ellipse cx="35" cy="18" rx="8" ry="9.500" fill="#7d4b22" />
          <ellipse cx="33.500" cy="15" rx="4.500" ry="6" fill="#a56c38" />
          <path d="M42 18Q38 8 47 -1Q47 4 49 6Q55 0 61 1Q57 6 60 10Q54 14 52 18Z" fill="#6f9b31" />
          <path d="M44 16Q44 8 48 4" fill="none" stroke="#a5c456" strokeWidth="1.200" />
          <path d="M36 26Q50 27 53 13Q63 19 60 26Q53 32 36 29Z" fill="#f9c535" />
          <path d="M40 28Q53 27 55 18" fill="none" stroke="#d19519" strokeWidth="1" />
        </svg>
      </div>
      <svg width="30" height="28" viewBox="0 0 30 28" className="ml-[17px] shrink-0">
        <rect x="0" y="8" width="22" height="20" rx="1.500" fill="#717373" />
        <rect x="8" y="0" width="22" height="20" rx="1.500" fill="#f0f0f0" />
        <path d="M8 8H22V20H8Z" fill="#b5b5b5" />
      </svg>
      <svg width="30" height="28" viewBox="0 0 30 28" className="ml-[25px] shrink-0">
        <defs>
          <linearGradient id="copA" x1="0" y1="0" x2="0" y2="1">
            <stop offset="0" stopColor="#19a0f5" />
            <stop offset="0.550" stopColor="#37b8b0" />
            <stop offset="1" stopColor="#e8d32e" />
          </linearGradient>
          <linearGradient id="copB" x1="0.500" y1="0" x2="0" y2="1">
            <stop offset="0" stopColor="#b45af0" />
            <stop offset="0.500" stopColor="#f2618c" />
            <stop offset="1" stopColor="#ffa64d" />
          </linearGradient>
        </defs>
        <path d="M13 0H19Q22 0 23 4L24 7H19Q16 7 15 11L12 20Q11 23 8 23H4Q0 22 1 17L5 5Q7 0 13 0Z" fill="url(#copA)" />
        <path d="M13 0H19Q22 0 23 4L24 7H17Q15 3 13 0Z" fill="#1546b4" />
        <path d="M17 28H11Q8 28 7 24L6 21H11Q14 21 15 17L18 8Q19 7 22 7H26Q30 8 29 12L25 23Q23 28 17 28Z" fill="url(#copB)" />
      </svg>
      <svg width="30" height="28" viewBox="0 0 30 28" className="ml-[25px] shrink-0">
        <path d="M0 2.500Q0 1 1.500 1H10L13 5H0Z" fill="#d99a10" />
        <rect y="4.500" width="30" height="22.500" rx="1.500" fill="#fccb3e" />
        <path d="M5 27V22Q5 19 8 19H22Q25 19 25 22V27Z" fill="#0b6cc4" />
        <path d="M9 23H21" stroke="#09427f" strokeWidth="1.300" />
      </svg>
      <svg width="30" height="30" viewBox="0 0 30 30" className="ml-[25px] shrink-0">
        <defs>
          <linearGradient id="edgeA" x1="0" y1="0" x2="1" y2="0.300">
            <stop offset="0" stopColor="#2aa7e8" />
            <stop offset="1" stopColor="#63e06a" />
          </linearGradient>
          <linearGradient id="edgeB" x1="0" y1="0" x2="0.700" y2="1">
            <stop offset="0" stopColor="#1d93e0" />
            <stop offset="1" stopColor="#1157a5" />
          </linearGradient>
        </defs>
        <path d="M0 15A15 15 0 0 1 30 13Q30 20 22 20Q17 20 18.500 17Q20 14 17 11Q9 6 0 15Z" fill="url(#edgeA)" />
        <path d="M0 15Q4 8 12 9Q17 10 17 12Q12 12 11 17Q11 24 19 25Q24 25 28 22Q23 30 15 30A15 15 0 0 1 0 15Z" fill="url(#edgeB)" />
      </svg>
      <svg width="29" height="30" viewBox="0 0 29 30" className="ml-[25px] shrink-0">
        <path d="M7.500 7V3Q7.500 1.500 9 1.500H20Q21.500 1.500 21.500 3V7" fill="none" stroke="#2bb0ee" strokeWidth="2" />
        <path d="M0 6H29V26Q29 30 25 30H4Q0 30 0 26Z" fill="#f2f2f2" />
        <path d="M9 12H14V17H9Z" fill="#f25022" />
        <path d="M15 12H20V17H15Z" fill="#7fba00" />
        <path d="M9 18H14V23H9Z" fill="#00a4ef" />
        <path d="M15 18H20V23H15Z" fill="#ffb900" />
      </svg>
      <div className="relative ml-[25px] h-[32px] w-[46px]">
        <FaWhatsapp className="h-[32px] w-[32px] text-[#25d366]" />
        <div className="absolute -top-[6px] left-[9px] flex h-[20px] w-[34px] items-center justify-center rounded-[8px] bg-[#4cc2ff] text-[14px] tracking-[-0.3px] text-black">
          99+
        </div>
      </div>
      <div className="flex h-[50px] w-[49px] flex-col items-center rounded-[5px] border border-[#353a3b] bg-[#2b2f30] pt-[9px]">
        <svg width="30" height="30" viewBox="0 0 30 30">
          <circle cx="15" cy="15" r="15" fill="#fbc116" />
          <path d="M15 15L2 7.500A15 15 0 0 1 28 7.500H15Z" fill="#e33b2e" />
          <path d="M15 15L2 7.500A15 15 0 0 0 14 30L21.500 18.700Z" fill="#2ba24c" />
          <path d="M15 7.500H28A15 15 0 0 1 14 30L21.500 18.700Z" fill="#fbc116" />
          <circle cx="15" cy="15" r="7.300" fill="#fff" />
          <circle cx="15" cy="15" r="5.700" fill="#3a7bea" />
        </svg>
        <div className="mt-[5px] h-[4px] w-[20px] rounded-full bg-[#4cc2ff]" />
      </div>
      <div className="ml-[18px] flex h-[26px] w-[26px] items-center justify-center rounded-[2px] bg-[#0a66c2] font-['Open_Sans',sans-serif] text-[23px] font-bold leading-none tracking-[-0.5px]">
        <span className="-mt-[3px]">in</span>
      </div>
      <svg width="31" height="28" viewBox="0 0 31 28" className="ml-[27px] shrink-0">
        <path d="M5 9L17 0L30 9V24Q30 27 27 27H9Q5 27 5 23Z" fill="#1e8fe0" />
        <path d="M17 0L30 9L18 18L8 7Z" fill="#3bb7f3" />
        <path d="M30 9L14 20V10L24 4Z" fill="#0f55b0" />
        <path d="M30 11V24Q30 27 27 27H10Q20 24 30 11Z" fill="#4bd3f8" />
        <rect x="0" y="6" width="16" height="16" rx="1.500" fill="#0f68c8" />
        <ellipse cx="8" cy="14" rx="3.600" ry="4" fill="none" stroke="#fff" strokeWidth="2.200" />
      </svg>
      <div className="ml-auto flex items-center pr-[26px]">
        <Icon w={14} h={8}>
          <path d="M1 7L7 1L13 7" strokeWidth={1.800} />
        </Icon>
        <div className="-mt-[3px] ml-[24px] w-[34px] text-center text-[15px] leading-[20px] tracking-[-0.3px]">
          <div>ENG</div>
          <div>IN</div>
        </div>
        <Icon w={20} h={20} className="ml-[20px]">
          <path d="M12 2H2.500Q1 2 1 3.500V14Q1 15.500 2.500 15.500H17M4 19.500H15M7 16V19M12 16V19M17.500 8V19.500M15 1H20V7.500H15Z" />
        </Icon>
        <Icon w={20} h={16} className="ml-[10px]">
          <path d="M1 5.500H4L8.500 1V15L4 10.500H1ZM12.500 5L18.500 11M18.500 5L12.500 11" strokeWidth={1.400} />
        </Icon>
        <Icon w={21} h={18} className="ml-[10px]">
          <rect x="3" y="4" width="15" height="12" rx="3" />
          <path d="M8 7H15.500V13.500H5.500V10Z" fill="currentColor" stroke="none" />
          <path d="M19 8V12" strokeWidth={2.600} />
          <path d="M3 0L0 7H3L2 12L8 4.500H5L6 0Z" fill="currentColor" stroke="#1e2223" strokeWidth={0.600} />
        </Icon>
        <div className="-mt-[4px] ml-[17px] w-[81px] text-right text-[15px] leading-[20px] tracking-[-0.050px]">
          <div>09:14</div>
          <div>07-11-2024</div>
        </div>
        <svg width="17" height="19" viewBox="0 0 17 19" className="ml-[10px] mr-[1px] shrink-0">
          <path d="M8.500 0Q14 0 14 6V11L16.500 15V16H0.500V15L3 11V6Q3 0 8.500 0ZM5.500 17H11.500Q11 19 8.500 19Q6 19 5.500 17Z" fill="#99ebff" />
        </svg>
      </div>
    </div>
  );
}

export default function App() {
  return (
    <div className="h-[1080px] w-[1920px] overflow-hidden bg-[#f2f2f2] font-['Open_Sans','Noto_Sans',sans-serif]">
      <TabStrip />
      <AddressBar />
      <AppHeader />
      <Toolbar />
      <Workspace />
      <SheetTabs />
      <StatusBar />
      <Taskbar />
    </div>
  );
}
